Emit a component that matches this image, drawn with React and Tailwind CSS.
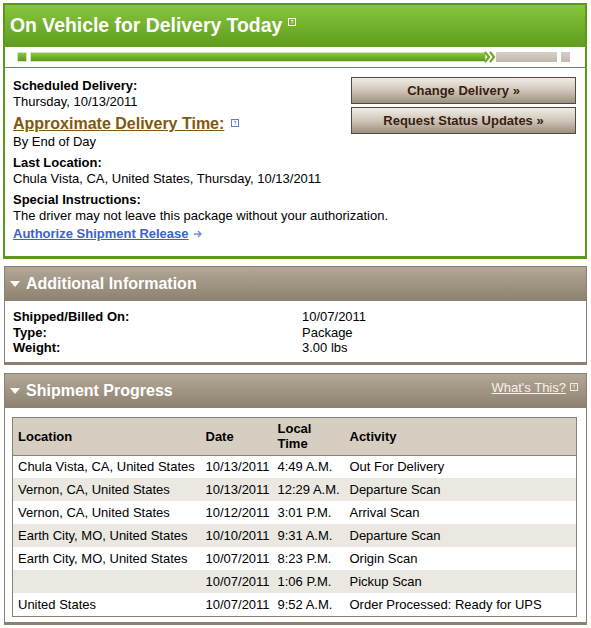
import { Fragment } from 'react'

const rows = [
	['Chula Vista, CA, United States', '10/13/2011', '4:49 A.M.', 'Out For Delivery'],
	['Vernon, CA, United States', '10/13/2011', '12:29 A.M.', 'Departure Scan'],
	['Vernon, CA, United States', '10/12/2011', '3:01 P.M.', 'Arrival Scan'],
	['Earth City, MO, United States', '10/10/2011', '9:31 A.M.', 'Departure Scan'],
	['Earth City, MO, United States', '10/07/2011', '8:23 P.M.', 'Origin Scan'],
	['', '10/07/2011', '1:06 P.M.', 'Pickup Scan'],
	['United States', '10/07/2011', '9:52 A.M.', 'Order Processed: Ready for UPS']
]

const HelpIcon = ({ color = '#ffffff', className = '' }) => (
	<svg width="8" height="8" viewBox="0 0 8 8" className={className}>
		<rect x="0.5" y="0.5" width="7" height="7" fill="none" stroke={color} strokeWidth="1" />
		<path d="M3 3 Q3 2 4 2 Q5 2 5 3 Q5 3.6 4 4 L4 4.6 M4 5.4 L4 6" fill="none" stroke={color} strokeWidth="0.8" />
	</svg>
)

const Triangle = () => (
	<svg width="10" height="6" viewBox="0 0 10 6" className="mr-[6px]">
		<path d="M0 0 L10 0 L5 6 Z" fill="#ffffff" />
	</svg>
)

const SectionHeader = ({ title, right }) => (
	<div className="flex h-[34px] items-center justify-between bg-gradient-to-b from-[#b3a897] to-[#8d8170] pl-[5px] pr-[8px]">
		<div className="flex items-center">
			<Triangle />
			<span className="text-[16px] font-bold text-white">{title}</span>
		</div>
		{right}
	</div>
)

const Button = ({ children }) => (
	<button className="h-[27px] w-[225px] border border-[#52483c] bg-gradient-to-b from-[#f0ede6] via-[#cfc6b8] to-[#9c907f] text-[13px] font-bold text-[#3b1d10]">
		{children}
	</button>
)

export default function App() {
	return (
		<div className="min-h-screen bg-white px-[3px] pt-[3px] text-[13px] text-black" style={{ fontFamily: '"Liberation Sans", Arial, sans-serif' }}>
			{/* status panel */}
			<div className="mr-[1px] border-2 border-b-[3px] border-[#5e9819]">
				<div className="flex h-[42px] items-center bg-gradient-to-b from-[#88c63e] to-[#5f9b1d] pl-[5px]">
					<h1 className="text-[19.4px] font-bold text-white">On Vehicle for Delivery Today</h1>
					<HelpIcon className="ml-[6px] -mt-[8px]" />
				</div>
				<div className="flex h-[21px] items-center border-b border-[#5e9819] bg-white pl-[12px]">
					<div className="h-[10px] w-[10px] border border-[#d4e6c0] bg-gradient-to-b from-[#86c43c] to-[#5a9a1c]" />
					<div className="ml-[3px] h-[10px] w-[456px] border border-[#d4e6c0] bg-gradient-to-b from-[#8bc741] to-[#5a9a1c]" />
					<svg width="12" height="12" viewBox="0 0 12 12" className="-ml-[2px]">
						<path d="M1 1 L5 6 L1 11" fill="none" stroke="#6aa82a" strokeWidth="2.2" />
						<path d="M6 1 L10 6 L6 11" fill="none" stroke="#6aa82a" strokeWidth="2.2" />
					</svg>
					<div className="h-[10px] w-[61px] bg-gradient-to-b from-[#d6cfc5] to-[#c2b9ac]" />
					<div className="ml-[4px] h-[10px] w-[9px] bg-gradient-to-b from-[#d6cfc5] to-[#c2b9ac]" />
				</div>
				<div className="flex justify-between bg-white pl-[8px] pr-[9px]">
					<div className="min-w-0 flex-1 whitespace-nowrap pt-[10px] pb-[14px] leading-[16px]">
						<p className="font-bold">Scheduled Delivery:</p>
						<p>Thursday, 10/13/2011</p>
						<p className="mt-[4px] flex items-center leading-[20px]">
							<span className="text-[16px] font-bold text-[#7f5810] underline">Approximate Delivery Time:</span>
							<HelpIcon color="#5a7fcf" className="ml-[7px] -mt-[2px]" />
						</p>
						<p>By End of Day</p>
						<p className="mt-[5px] font-bold">Last Location:</p>
						<p>Chula Vista, CA, United States, Thursday, 10/13/2011</p>
						<p className="mt-[5px] font-bold">Special Instructions:</p>
						<p>The driver may not leave this package without your authorization.</p>
						<p className="mt-[2px] flex items-center">
							<span className="font-bold text-[#3c64c6] underline">Authorize Shipment Release</span>
							<svg width="9" height="8" viewBox="0 0 9 8" className="ml-[5px]">
								<path d="M0 4 L7 4 M4 1 L7 4 L4 7" fill="none" stroke="#6f8fd6" strokeWidth="1.4" />
							</svg>
						</p>
					</div>
					<div className="flex shrink-0 flex-col gap-[3px] pt-[9px]">
						<Button>Change Delivery »</Button>
						<Button>Request Status Updates »</Button>
					</div>
				</div>
			</div>

			{/* additional information */}
			<div className="mx-[1px] mt-[7px] border border-b-[3px] border-[#8c8170]">
				<SectionHeader title="Additional Information" />
				<div className="grid grid-cols-[289px_1fr] bg-white pb-[6px] pl-[8px] pt-[8px] leading-[15.5px]">
					<p className="font-bold">Shipped/Billed On:</p>
					<p>10/07/2011</p>
					<p className="font-bold">Type:</p>
					<p>Package</p>
					<p className="font-bold">Weight:</p>
					<p>3.00 lbs</p>
				</div>
			</div>

			{/* shipment progress */}
			<div className="mx-[1px] mt-[8px] border border-b-[3px] border-[#8c8170]">
				<SectionHeader
					title="Shipment Progress"
					right={
						<div className="flex items-center gap-[4px] self-start pt-[4px]">
							<span className="text-[13px] text-[#f6f2ea] underline">What's This?</span>
							<HelpIcon color="#efe9df" />
						</div>
					}
				/>
				<div className="bg-white pb-[5px] pl-[7px] pr-[9px] pt-[9px]">
					<table className="w-full table-fixed border-collapse border border-[#8c8170]">
						<colgroup>
							<col className="w-[188px]" />
							<col className="w-[72px]" />
							<col className="w-[72px]" />
							<col />
						</colgroup>
						<thead>
							<tr className="h-[38px] border-b border-[#8c8170] bg-[#d6cec0] text-left align-middle font-bold leading-[15px]">
								<th className="pl-[5px]">Location</th>
								<th className="pl-[5px]">Date</th>
								<th className="pl-[5px]">
									Local
									<br />
									Time
								</th>
								<th className="pl-[5px]">Activity</th>
							</tr>
						</thead>
						<tbody>
							{rows.map((row, index) => (
								<tr key={index} className={`h-[23px] ${index % 2 === 1 ? 'bg-[#ebe8e2]' : 'bg-white'}`}>
									{row.map((cell, i) => (
										<Fragment key={i}>
											<td className="whitespace-nowrap pl-[5px]">{cell}</td>
										</Fragment>
									))}
								</tr>
							))}
						</tbody>
					</table>
				</div>
			</div>
		</div>
	)
}
